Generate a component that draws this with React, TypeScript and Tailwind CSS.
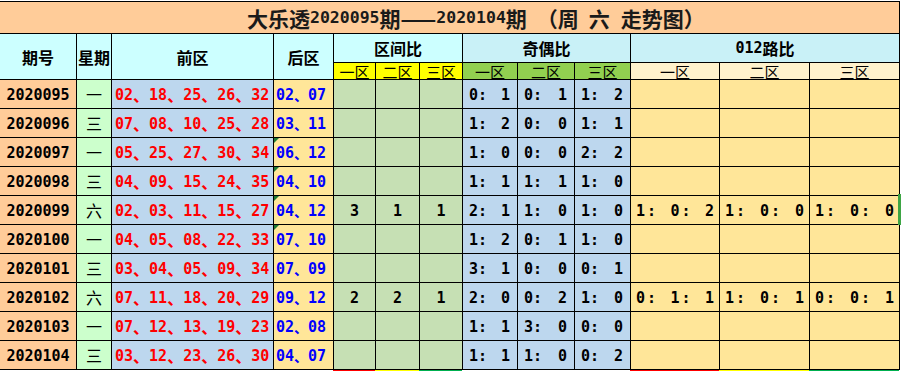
import React from 'react';

const cjk = "font-['Noto_Sans_CJK_SC',sans-serif]";
const mono = "font-['DejaVu_Sans_Mono','Noto_Sans_CJK_SC',monospace]";

type Row = {
  period: string;
  day: string;
  front: string;
  back: string;
  zone: string[];
  odd: string[];
  road: string[];
  mark?: boolean;
};

const E = ['', '', ''];

const ROWS: Row[] = [
  { period: '2020095', day: '一', front: '02、18、25、26、32', back: '02、07', zone: E, odd: ['0：1', '0：1', '1：2'], road: E },
  { period: '2020096', day: '三', front: '07、08、10、25、28', back: '03、11', zone: E, odd: ['1：2', '0：0', '1：1'], road: E },
  { period: '2020097', day: '一', front: '05、25、27、30、34', back: '06、12', zone: E, odd: ['1：0', '0：0', '2：2'], road: E, mark: true },
  { period: '2020098', day: '三', front: '04、09、15、24、35', back: '04、10', zone: E, odd: ['1：1', '1：1', '1：0'], road: E, mark: true },
  { period: '2020099', day: '六', front: '02、03、11、15、27', back: '04、12', zone: ['3', '1', '1'], odd: ['2：1', '1：0', '1：0'], road: ['1：0：2', '1：0：0', '1：0：0'], mark: true },
  { period: '2020100', day: '一', front: '04、05、08、22、33', back: '07、10', zone: E, odd: ['1：2', '0：1', '1：0'], road: E, mark: true },
  { period: '2020101', day: '三', front: '03、04、05、09、34', back: '07、09', zone: E, odd: ['3：1', '0：0', '0：1'], road: E },
  { period: '2020102', day: '六', front: '07、11、18、20、29', back: '09、12', zone: ['2', '2', '1'], odd: ['2：0', '0：2', '1：0'], road: ['0：1：1', '1：0：1', '0：0：1'] },
  { period: '2020103', day: '一', front: '07、12、13、19、23', back: '02、08', zone: E, odd: ['1：1', '3：0', '0：0'], road: E },
  { period: '2020104', day: '三', front: '03、12、23、26、30', back: '04、07', zone: E, odd: ['1：1', '1：0', '0：2'], road: E },
];

// numbers joined by 、 — the mark is given its own box so the pitch matches the sheet
function Nums({ text, sep }: { text: string; sep: string }) {
  const parts = text.split('、');
  return (
    <>
      {parts.map((p, i) => (
        <React.Fragment key={i}>
          <span>{p}</span>
          {i < parts.length - 1 && <span className={`inline-block ${sep} ${cjk} font-bold`}>、</span>}
        </React.Fragment>
      ))}
    </>
  );
}

function OddRatio({ text }: { text: string }) {
  if (!text) return null;
  const [a, b] = text.split('：');
  return (
    <div className="flex w-full items-center justify-between pl-[6px] pr-[7px]">
      <span>
        {a}
        <span>:</span>
      </span>
      <span>{b}</span>
    </div>
  );
}

function RoadRatio({ text }: { text: string }) {
  if (!text) return null;
  const [a, b, c] = text.split('：');
  return (
    <div className="flex w-full items-center justify-between px-[5px]">
      <span>
        {a}
        <span className="ml-[2px]">:</span>
      </span>
      <span>
        {b}
        <span className="ml-[2px]">:</span>
      </span>
      <span>{c}</span>
    </div>
  );
}

const head = `flex items-center justify-center ${cjk} text-[16px] font-bold text-black`;
const sub = `flex items-center justify-center ${cjk} text-[15px] leading-none underline underline-offset-[1px] text-black`;
const cell = `flex items-center ${mono} text-[15px] font-bold leading-none pt-[2px]`;

export default function App() {
  return (
    <div className="relative h-[371px] w-[901px] overflow-hidden bg-white pt-px">
      <div className="grid w-[900px] grid-cols-[76px_34px_161px_59px_41px_43px_42px_54px_56px_55px_88px_89px_89px] grid-rows-[31px_28px_16px_repeat(10,28px)] gap-px border-t border-r border-b border-black bg-black">
        <div className={`col-span-13 flex items-center bg-[#ffcc99] pl-[247px] pt-[1px] ${cjk} text-[21px] font-bold leading-none text-[#1a1a1a]`}>
          <span>大乐透</span>
          <span className={`${mono} text-[16.5px]`}>2020095</span>
          <span>期——</span>
          <span className={`${mono} text-[16.5px]`}>2020104</span>
          <span>期</span>
          <span className="inline-block w-[10px]" />
          <span>（周</span>
          <span className="inline-block w-[10px]" />
          <span>六</span>
          <span className="inline-block w-[11px]" />
          <span>走势图）</span>
        </div>

        <div className={`row-span-2 bg-[#ccffff] ${head}`}>期号</div>
        <div className={`row-span-2 bg-[#ccffff] ${head}`}>星期</div>
        <div className={`row-span-2 bg-[#ccffff] ${head}`}>前区</div>
        <div className={`row-span-2 bg-[#ccffff] ${head}`}>后区</div>
        <div className={`col-span-3 bg-[#ccffff] ${head}`}>区间比</div>
        <div className={`col-span-3 bg-[#c9f1f7] ${head}`}>奇偶比</div>
        <div className={`col-span-3 bg-[#c9f1f7] ${head}`}>
          <span className={`${mono} text-[15px]`}>012</span>路比
        </div>

        {['一区', '二区', '三区'].map((t) => (
          <div key={'z' + t} className={`bg-[#ffff00] ${sub}`}>{t}</div>
        ))}
        {['一区', '二区', '三区'].map((t) => (
          <div key={'o' + t} className={`bg-[#92d050] ${sub}`}>{t}</div>
        ))}
        {['一区', '二区', '三区'].map((t) => (
          <div key={'r' + t} className={`bg-[#fff2cc] ${sub}`}>{t}</div>
        ))}

        {ROWS.map((r) => (
          <React.Fragment key={r.period}>
            <div className={`${cell} justify-center bg-[#ffcc99] text-black`}>{r.period}</div>
            <div className={`flex items-center justify-center bg-[#ccffcc] ${cjk} text-[16px] text-black`}>{r.day}</div>
            <div className={`${cell} justify-start bg-[#bdd7ee] pl-[3px] text-[#ff0000]`}>
              <Nums text={r.front} sep="w-[16px] text-[16px]" />
            </div>
            <div className={`${cell} relative justify-start bg-[#ffe699] pl-[2px] text-[#0000ff]`}>
              {r.mark && (
                <svg className="absolute left-0 top-0" width="5" height="5" viewBox="0 0 5 5">
                  <polygon points="0,0 5,0 0,5" fill="#1e7b34" />
                </svg>
              )}
              <Nums text={r.back} sep="w-[14px] text-[14px]" />
            </div>
            {r.zone.map((z, i) => (
              <div key={'z' + i} className={`${cell} justify-center bg-[#c6e0b4] text-black`}>{z}</div>
            ))}
            {r.odd.map((o, i) => (
              <div key={'o' + i} className={`${cell} bg-[#bdd7ee] text-black`}>
                <OddRatio text={o} />
              </div>
            ))}
            {r.road.map((o, i) => (
              <div key={'r' + i} className={`${cell} bg-[#ffe699] text-black`}>
                <RoadRatio text={o} />
              </div>
            ))}
          </React.Fragment>
        ))}
      </div>

      <div className="flex h-[2px]">
        <div className="w-[333px]" />
        <div className="w-[42px] bg-[#ff0000]" />
        <div className="w-[44px] bg-[#ffff00]" />
        <div className="w-[43px] bg-[#00b050]" />
        <div className="w-[168px]" />
        <div className="w-[89px] bg-[#ff0000]" />
        <div className="w-[90px] bg-[#ffff00]" />
        <div className="w-[90px] bg-[#00b050]" />
      </div>

      <div className="absolute left-[898px] top-[194px] h-[31px] w-[3px] bg-[#3da544]" />
    </div>
  );
}
